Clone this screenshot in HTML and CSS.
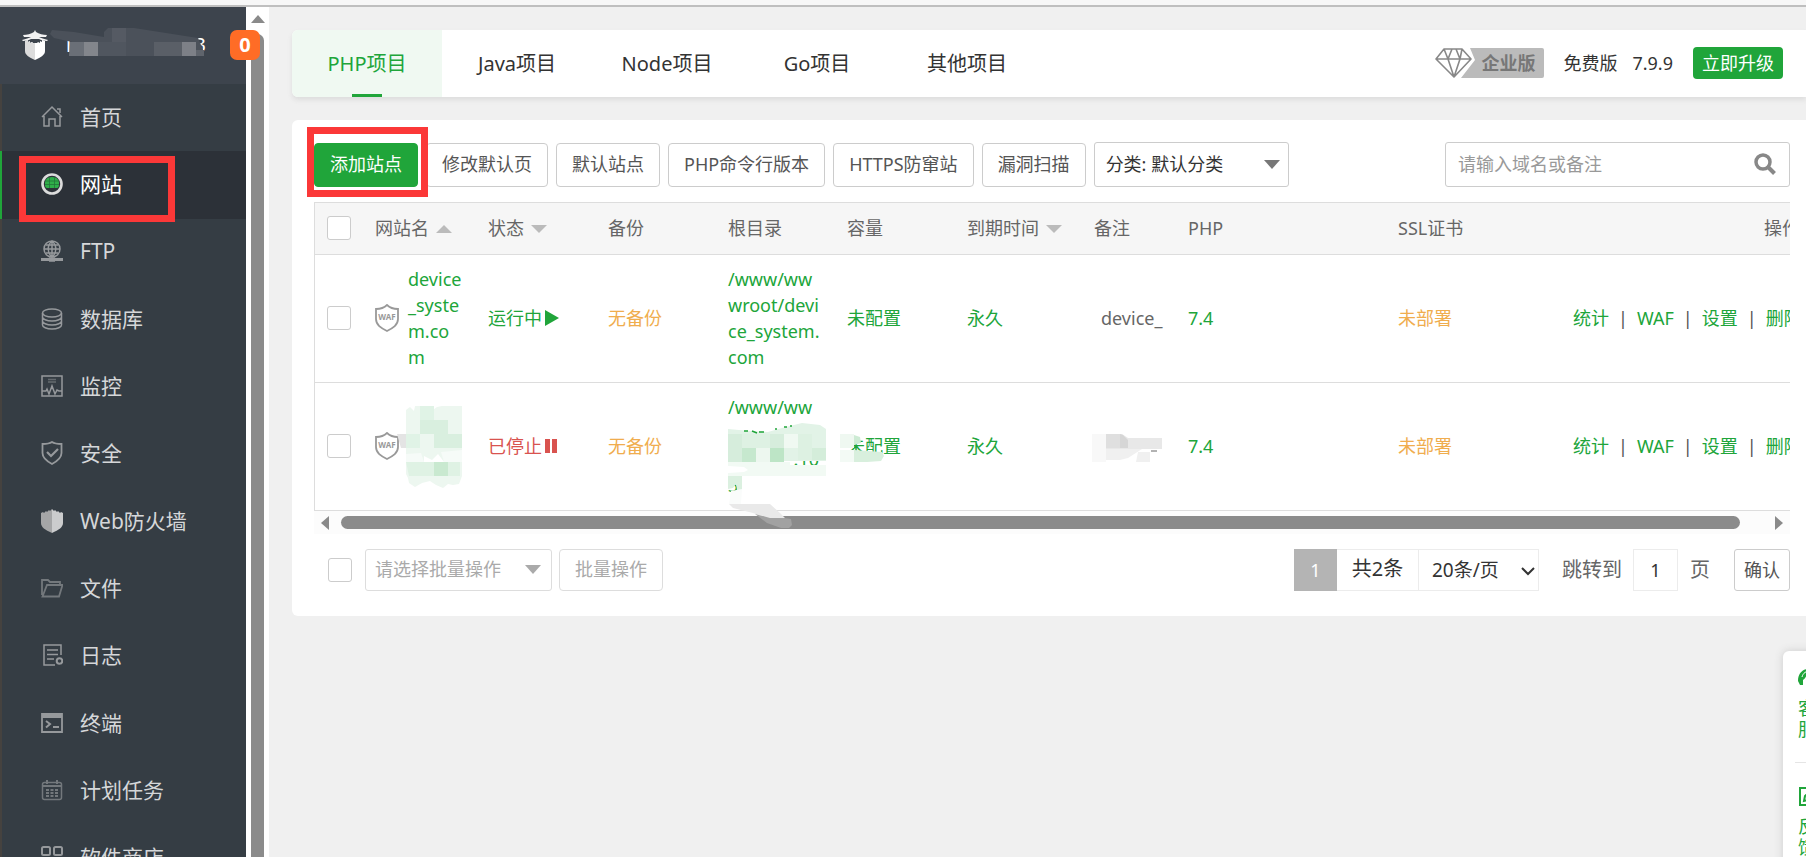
FILE: index.html
```html
<!DOCTYPE html>
<html lang="zh-CN">
<head>
<meta charset="utf-8">
<title>网站</title>
<link rel="stylesheet" href="styles.css">
</head>
<body>
<div class="chrome-edge"></div>
<div class="app">
  <aside class="sidebar">
    <header class="brand">
      <svg class="brand-logo" viewBox="0 0 26 30" width="26" height="30" aria-hidden="true">
        <path d="M13 0l1 2c3 2 7 3 11 3l-1 2H2L1 5c4 0 8-1 11-3z" fill="#f2f2f2"/>
        <path d="M0 10c4-1 7-2 9-3h8c2 1 5 2 9 3l-1 1c-3 0-6-1-8-2H9c-2 1-5 2-8 2z" fill="#f2f2f2"/>
        <path d="M3 11l3-1v2l2-1v2l2-1 1 1h4l1-1 2 1v-2l2 1v-2l3 1v10c0 4-4 6-10 9z" fill="#fff"/>
        <path d="M3 11l3-1v2l2-1v2l2-1 1 1h2v17C7 27 3 25 3 21z" fill="#dcdcdc"/>
      </svg>
      <span class="brand-name"><span>T</span><span>3</span></span>
      <svg class="brand-mask" viewBox="50 27 156 30" width="156" height="30" aria-hidden="true">
        <path d="M52 30l22 2 30 5v-5l4-4h26l64 10 6 14-3 4H69l3-14-18-4-4-4z" fill="#4b515a"/>
        <path d="M70 42h14v14H69z" fill="#6a6f77"/><path d="M84 42h14v14H84z" fill="#83868c"/>
        <path d="M98 42h28v14H98z" fill="#50565f"/><path d="M112 28h14v14h-14z" fill="#555a63"/>
        <path d="M154 42h28v14h-28z" fill="#5a5f67"/><path d="M182 42h14v14h-14z" fill="#7d8087"/>
        <path d="M196 50h8v6h-8z" fill="#5f646c"/>
      </svg>
      <span class="badge">0</span>
    </header>
    <nav class="menu">
      <a class="item" href="#"><svg class="ico" viewBox="0 0 22 22"><path d="M1 11L11 1l10 10M3 10v10h5v-7h6v7h5V10M16 3h3v4"/></svg>首页</a>
      <a class="item active" href="#"><svg class="ico" viewBox="0 0 22 22"><circle cx="11" cy="11" r="9.500" stroke="#dcdcdc" stroke-width="2.600"/><path d="M4 10c0-3 2-6 7-6s7 3 7 6v2c0 2-1 3-2 3H6c-1 0-2-1-2-3z" fill="#2fae49" stroke="none"/><path d="M4 8h14M4 11.500h14M8.500 4v11M13.500 4v11" stroke="#23753a" stroke-width=".8"/></svg>网站</a>
      <a class="item" href="#"><svg class="ico" viewBox="0 0 22 22"><circle cx="11" cy="9" r="8"/><path d="M3 9h16M11 1v16M5 5h12M5 13h12M11 1c-5 4-5 12 0 16M11 1c5 4 5 12 0 16"/><path d="M0 19.500h22" stroke-width="3"/><path d="M8 19.500h6" stroke-width="4.500"/></svg>FTP</a>
      <a class="item" href="#"><svg class="ico" viewBox="0 0 22 22"><ellipse cx="11" cy="5" rx="9.500" ry="4"/><path d="M1.500 5v12c0 2 4 4 9.500 4s9.500-2 9.500-4V5M1.500 9c0 2 4 4 9.500 4s9.500-2 9.500-4M1.500 13c0 2 4 4 9.500 4s9.500-2 9.500-4"/></svg>数据库</a>
      <a class="item" href="#"><svg class="ico" viewBox="0 0 22 22"><path d="M1 1h20v20H1zM1 16h4l1-2 2 5 3-8 3 8 2-4 2 1h3"/><path d="M7 4.500h8M7 7h8" opacity=".5"/></svg>监控</a>
      <a class="item" href="#"><svg class="ico" viewBox="0 0 22 24"><path d="M11 1c3 2 6 2 9.500 2v9c0 5-4 8-9.500 11-5.500-3-9.500-6-9.500-11V3C5 3 8 3 11 1z" stroke-width="1.800"/><path d="M6 11l4 4 7-7" stroke-width="2.200"/></svg>安全</a>
      <a class="item" href="#"><svg class="ico" viewBox="0 0 22 24"><path d="M0 4l2-1 1 1 2-2 1 1 2-2 1 1 2-2v24C4 21 0 18 0 14z" fill="#a5a6a7" stroke="none"/><path d="M22 4l-2-1-1 1-2-2-1 1-2-2-1 1-2-2v24c7-3 11-6 11-10z" fill="#cbcccd" stroke="none"/></svg>Web防火墙</a>
      <a class="item" href="#"><svg class="ico dim" viewBox="0 0 22 22"><path d="M1 18V3h6l2 2h10v3M1.500 19.500L6 8h15.500L18 19.500z" stroke-width="1.800"/></svg>文件</a>
      <a class="item" href="#"><svg class="ico" viewBox="0 0 22 22"><path d="M14 21H3V1h17v10M6 6h11M6 10.500h11M6 15h7"/><circle cx="18.500" cy="17" r="2.800" stroke-width="2"/></svg>日志</a>
      <a class="item" href="#"><svg class="ico" viewBox="0 0 22 22"><path d="M1 2h20v18H1z" stroke-width="1.800"/><path d="M1 4h20" stroke-width="4"/><path d="M5 9l4 3-4 3.500M12 15h6" stroke-width="2"/></svg>终端</a>
      <a class="item" href="#"><svg class="ico dim" viewBox="0 0 22 22"><rect x="1.500" y="3.500" width="19" height="17" rx="2"/><path d="M1.500 7h19M6 1v4M16 1v4" stroke-width="2"/><path d="M5 11h3M9.500 11h3M14 11h3M5 14h3M9.500 14h3M14 14h3M5 17h3M9.500 17h3M14 17h3" stroke-width="2"/></svg>计划任务</a>
      <a class="item" href="#"><svg class="ico" viewBox="0 0 22 22"><rect x="1" y="1" width="8" height="8" rx="1.500" stroke-width="2"/><rect x="13" y="1" width="8" height="8" rx="1.500" stroke-width="2"/><rect x="1" y="13" width="8" height="8" rx="1.500" stroke-width="2"/><rect x="13" y="13" width="8" height="8" rx="1.500" stroke-width="2"/></svg>软件商店</a>
    </nav>
    <div class="mark mark-menu"></div>
  </aside>
  <div class="vbar"><span class="tri up"></span><span class="vthumb"></span></div>
  <main class="main">
    <section class="tabs">
      <nav class="tab-list">
        <a class="tab on" href="#">PHP项目</a>
        <a class="tab" href="#">Java项目</a>
        <a class="tab" href="#">Node项目</a>
        <a class="tab" href="#">Go项目</a>
        <a class="tab" href="#">其他项目</a>
      </nav>
      <div class="edition">
        <span class="pro">
          <svg viewBox="0 0 110 32" width="110" height="32" aria-hidden="true">
            <path d="M35 1h72a2 2 0 0 1 2 2v26a2 2 0 0 1-2 2H26L40 13z" fill="#bbb"/>
            <path d="M1 12L9 2h18l9 10-17 18zM1 12h35M9 2l4 10 6 18 6-18 2-10M13 12l4-10M25 12L21 2" fill="none" stroke="#888" stroke-width="1.600" stroke-linejoin="round"/>
          </svg>
          <b>企业版</b>
        </span>
        <span class="free">免费版</span>
        <span class="ver">7.9.9</span>
        <button class="upgrade" type="button">立即升级</button>
      </div>
    </section>

    <section class="panel">
      <div class="toolbar">
        <span class="add-wrap"><button class="btn primary" type="button">添加站点</button><span class="mark mark-add"></span></span>
        <button class="btn" type="button">修改默认页</button>
        <button class="btn" type="button">默认站点</button>
        <button class="btn" type="button">PHP命令行版本</button>
        <button class="btn" type="button">HTTPS防窜站</button>
        <button class="btn" type="button">漏洞扫描</button>
        <span class="pick pick-cat"><select aria-label="分类"><option>分类: 默认分类</option></select><span class="tri down"></span></span>
        <span class="search">
          <input type="text" placeholder="请输入域名或备注" aria-label="请输入域名或备注">
          <svg viewBox="0 0 22 22" width="22" height="22" aria-hidden="true"><circle cx="9" cy="9" r="7" fill="none" stroke="#888" stroke-width="3.500"/><path d="M14 14l6.500 6.500" stroke="#888" stroke-width="4"/></svg>
        </span>
      </div>

      <div class="grid-wrap">
        <table class="sites">
          <colgroup><col class="c-check"><col class="c-name"><col class="c-mid"><col class="c-mid"><col class="c-root"><col class="c-mid"><col class="c-exp"><col class="c-note"><col class="c-php"><col class="c-ssl"><col class="c-ops"></colgroup>
          <thead>
            <tr>
              <th><input class="tick" type="checkbox" aria-label="全选"></th>
              <th>网站名<span class="tri sort asc"></span></th>
              <th>状态<span class="tri sort"></span></th>
              <th>备份</th><th>根目录</th><th>容量</th>
              <th>到期时间<span class="tri sort"></span></th>
              <th>备注</th><th>PHP</th><th>SSL证书</th><th class="ops">操作</th>
            </tr>
          </thead>
          <tbody>
            <tr>
              <td><input class="tick" type="checkbox" aria-label="选择站点一"></td>
              <td><span class="site"><svg class="waf" viewBox="0 0 24 28"><path d="M12 1c3 3 7 4 11 4v10c0 6-5 9-11 12C6 24 1 21 1 15V5c4 0 8-1 11-4z"/><text x="12" y="16" text-anchor="middle">WAF</text></svg><a class="wrap" href="#">device_system.com</a></span></td>
              <td><a class="state" href="#">运行中<svg viewBox="0 0 14 16" width="14" height="16"><path d="M0 0l14 8-14 8z" fill="#20a53a"/></svg></a></td>
              <td><a class="warn" href="#">无备份</a></td>
              <td><a class="wrap" href="#">/www/wwwroot/device_system.com</a></td>
              <td><a href="#">未配置</a></td>
              <td><a href="#">永久</a></td>
              <td><span class="note">device_</span></td>
              <td><a href="#">7.4</a></td>
              <td><a class="warn" href="#">未部署</a></td>
              <td class="ops"><a href="#">统计</a><i>|</i><a href="#">WAF</a><i>|</i><a href="#">设置</a><i>|</i><a href="#">删除</a></td>
            </tr>
            <tr>
              <td><input class="tick" type="checkbox" aria-label="选择站点二"></td>
              <td><span class="site"><svg class="waf" viewBox="0 0 24 28"><path d="M12 1c3 3 7 4 11 4v10c0 6-5 9-11 12C6 24 1 21 1 15V5c4 0 8-1 11-4z"/><text x="12" y="16" text-anchor="middle">WAF</text></svg></span></td>
              <td><a class="state stopped" href="#">已停止<svg viewBox="0 0 12 14" width="12" height="14"><path d="M0 0h5v14H0zM7 0h5v14H7z" fill="#d9534f"/></svg></a></td>
              <td><a class="warn" href="#">无备份</a></td>
              <td><a class="path" href="#"><span>/www/ww</span><span></span><span class="end">.10</span><span>3</span></a></td>
              <td><a href="#">未配置</a></td>
              <td><a href="#">永久</a></td>
              <td><span class="note"></span></td>
              <td><a href="#">7.4</a></td>
              <td><a class="warn" href="#">未部署</a></td>
              <td class="ops"><a href="#">统计</a><i>|</i><a href="#">WAF</a><i>|</i><a href="#">设置</a><i>|</i><a href="#">删除</a></td>
            </tr>
          </tbody>
        </table>
        <div class="hbar"><span class="tri left"></span><span class="hthumb"></span><span class="tri right"></span></div>
        <svg class="redact" viewBox="314 202 1476 332" width="1476" height="332" aria-hidden="true">
          <path d="M397 434h10v14h-6z" fill="#e4e4e4"/>
          <path d="M406 410l4-3 4 4 1-5h14l4 4 4-3 5-1h20v70l-3 8-6 1-5-1-5 4-7-3-6-4-8 2-7 4-6-4-1-5-2-4z" fill="#edf7f0"/>
          <path d="M420 406h14v14h-14zM434 420h14v14h-14zM406 434h14v14h-14z" fill="#e0f3e6"/>
          <path d="M420 420h28v14h-28zM434 434h28v14h-28z" fill="#d9efdf"/>
          <path d="M406 462h54v14h-51z" fill="#dff2e4"/><path d="M434 462h14v14h-14z" fill="#c9e9d0"/>
          <path d="M406 454l15-1 3 9h-18zM441 452l21-2v12h-18z" fill="#f6fbf8"/><path d="M424 456l8 4 6-6 6 8h-20z" fill="#fff"/>
          <path d="M728 429l22 2 18 1 14-4 20-5 18 2 6 4v32h-98z" fill="#e2f3e7"/>
          <path d="M744 431h4M752 431l5 2M759 432h5M775 429h2M784 427h3M790 426h2" stroke="#20a53a" stroke-width="1.500"/>
          <path d="M728 434h14v14h-14zM728 448h14v14h-14zM770 434h14v14h-14z" fill="#d6eddc"/>
          <path d="M742 434h28v14h-28z" fill="#def1e3"/><path d="M784 434h14v14h-14z" fill="#f0f9f2"/><path d="M798 434h14v26h-14z" fill="#ddf1e2"/>
          <path d="M742 448h14v14h-14z" fill="#c6e8ce"/><path d="M756 448h14v14h-14z" fill="#edf7ef"/><path d="M770 448h14v14h-14z" fill="#bde5c6"/><path d="M812 448h14v12h-14z" fill="#d4edda"/>
          <path d="M728 462h62v3h36v11h-98z" fill="#f2faf4"/>
          <path d="M728 466l16 1 4 3-4 2-16 1z" fill="#fff"/>
          <path d="M728 476h14v14h-5l-1-6-3 4-5 1z" fill="#dbf0e0"/>
          <path d="M731 491l11-2-1 15h-12z" fill="#fafcfb"/>
          <path d="M729 504h41l10 9 5 5h-18l-14-5-20-5z" fill="#e9e9e9"/>
          <path d="M755 514l15 4h14l7 1 1 6-3 3h-8l-14-5z" fill="#a2a2a2"/>
          <path d="M840 434h14v14h-14z" fill="#eff8f1"/><path d="M854 435l6 2 1 6-7 2z" fill="#cdebd4"/>
          <path d="M840 450h14v12h-14z" fill="#f3faf5"/><path d="M854 450l28 2 2 4-3 5-14 1h-13z" fill="#d8efdd"/>
          <path d="M1092 434h14v28h-14z" fill="#f8f8f8"/><path d="M1106 434h16l6 4h34v11h-56z" fill="#e8e8e8"/>
          <path d="M1106 434h14v14h-14z" fill="#dfdfdf"/><path d="M1120 434l3 1 5 5v8h-8z" fill="#d6d6d6"/>
          <path d="M1106 449h36l-14 9-8 2h-14zM1138 452h12v10h-14z" fill="#f0f0f0"/><path d="M1151 451h6" stroke="#666"/>
        </svg>
      </div>

      <div class="footer">
        <input class="tick" type="checkbox" aria-label="选择全部站点">
        <span class="pick pick-batch"><select aria-label="批量操作类型"><option>请选择批量操作</option></select><span class="tri down"></span></span>
        <button class="btn muted" type="button">批量操作</button>
        <div class="pager">
          <span class="page-now">1</span>
          <span class="page-total">共2条</span>
          <span class="pick pick-size"><select aria-label="每页条数"><option>20条/页</option></select><svg viewBox="0 0 14 10" width="14" height="10" aria-hidden="true"><path d="M1 2l6 6 6-6" fill="none" stroke="#333" stroke-width="2"/></svg></span>
          <label class="jump" for="jump">跳转到</label>
          <input class="page-in" id="jump" type="text" value="1">
          <span class="unit">页</span>
          <button class="ok" type="button">确认</button>
        </div>
      </div>
    </section>
  </main>
  <aside class="help">
    <a class="help-item" href="#"><svg viewBox="0 0 20 18" width="20" height="18"><path d="M0 12C0 5 4 0 11 0s9 5 9 11v4h-4V9c-3 0-6-2-7-4-1 3-2 5-4 6v5H2z" fill="#20a53a"/><path d="M4 8c1-4 4-6 8-6" stroke="#fff" fill="none"/></svg>客服</a>
    <a class="help-item" href="#"><svg viewBox="0 0 20 20" width="20" height="20"><path d="M12 1H2v17h16V8M6 14l1-5 9-8 3 3-9 9z" fill="none" stroke="#20a53a" stroke-width="2"/></svg>反馈</a>
  </aside>
</div>
</body>
</html>
```
FILE: styles.css
```css
* { box-sizing: border-box; }
body {
  margin: 0;
  height: 100vh;
  overflow: hidden;
  background: #f0f0f0;
  color: #555;
  font: 18px/26px "Noto Sans", "Noto Sans CJK SC", sans-serif;
}
a { color: #20a53a; text-decoration: none; }
button, input, select { font: inherit; color: inherit; margin: 0; }
select { appearance: none; background: transparent; border: 0; outline: 0; }

.chrome-edge { height: 7px; background: #f7f7f7; border-bottom: 2px solid #bfbfbf; }
.app {
  position: relative;
  display: grid;
  grid-template-columns: 246px 23px minmax(0, 1fr);
  height: calc(100vh - 7px);
  overflow: hidden;
}

/* sidebar */
.sidebar { position: relative; background: #353d44; }
.brand {
  position: relative;
  display: flex;
  align-items: center;
  gap: 15px;
  height: 77px;
  padding: 0 40px 2px 22px;
  background: #3d444d;
  color: #fff;
}
.brand-name { display: flex; flex: 1; justify-content: space-between; font-size: 20px; }
.brand-logo { flex: none; }
.brand-mask { position: absolute; left: 50px; top: 20px; }
.badge {
  position: absolute;
  z-index: 2;
  right: -14px;
  top: 23px;
  width: 30px;
  height: 30px;
  border-radius: 7px;
  background: #ff6c26;
  font-weight: 700;
  font-size: 20px;
  line-height: 30px;
  text-align: center;
}
.menu { display: grid; grid-auto-rows: 1fr; height: 808px; }
.item {
  display: flex;
  align-items: center;
  gap: 17px;
  padding: 0 0 2px 39px;
  border-left: 2px solid #45423f;
  color: #d5d7d9;
  font-size: 21px;
}
.item.active { background: #2c3138; border-color: #20a53a; color: #fff; }
.ico { width: 22px; height: 24px; fill: none; stroke: #96999c; stroke-width: 1.5px; flex: none; }
.ico.dim { stroke: #73787c; }

.mark { position: absolute; border: 7px solid #fb3838; pointer-events: none; }
.mark-menu { left: 19px; top: 149px; width: 156px; height: 66px; }
.mark-add { left: -7px; top: -16px; width: 121px; height: 70px; }

/* arrows and scroll bars */
.tri { display: inline-block; width: 0; height: 0; border: 8px solid transparent; }
.tri.up { border-width: 0 7px 8px; border-bottom-color: #8a8a8a; }
.tri.down { border-width: 9px 8px 0; border-top-color: #777; }
.tri.left { border-width: 7px 8px 7px 0; border-right-color: #8a8a8a; }
.tri.right { border-width: 7px 0 7px 8px; border-left-color: #8a8a8a; }
.tri.sort { border-width: 8px 8px 0; border-top-color: #bbb; margin-left: 7px; vertical-align: 2px; }
.tri.sort.asc { border-width: 0 8px 8px; border-bottom-color: #bbb; }
.vbar { display: flex; flex-direction: column; align-items: center; gap: 11px; padding-top: 8px; background: #fff; }
.vthumb { flex: 1; width: 13px; border-radius: 7px 7px 0 0; background: #8b8b8b; }
.hbar { display: flex; align-items: center; gap: 12px; height: 23px; padding: 0 7px; background: #fcfcfc; }
.hbar .tri.right { margin-left: 23px; }
.hthumb { flex: 1; height: 13px; border-radius: 7px; background: #8b8b8b; }

/* project tabs */
.main { padding: 23px 0 0 23px; }
.tabs {
  display: flex;
  justify-content: space-between;
  height: 67px;
  border-radius: 6px 0 0 6px;
  background: #fff;
  box-shadow: 0 3px 5px #ddd;
}
.tab-list { display: flex; }
.tab {
  position: relative;
  width: 150px;
  line-height: 67px;
  font-size: 20px;
  text-align: center;
  color: #333;
}
.tab.on { color: #20a53a; background: #f0f9f2; border-radius: 6px 0 0 6px; }
.tab.on::after {
  content: "";
  position: absolute;
  left: 60px;
  bottom: 0;
  width: 30px;
  height: 3px;
  background: #20a53a;
}
.edition { display: flex; align-items: center; padding: 0 23px 2px 0; color: #333; }
.pro { position: relative; display: flex; }
.pro b { position: absolute; left: 46px; top: 3px; color: #777; }
.free { margin-left: 18px; }
.ver { margin: 0 20px 0 15px; }
.upgrade { height: 32px; padding: 0 9px; border: 0; border-radius: 4px; background: #20a53a; color: #fff; line-height: 30px; }

/* panel */
.panel { margin-top: 23px; padding: 22px 16px 25px 22px; border-radius: 6px 0 0 6px; background: #fff; }
.toolbar { display: flex; align-items: center; gap: 8px; height: 45px; margin-bottom: 15px; }
.add-wrap { position: relative; }
.add-wrap .btn { display: block; }
.btn {
  height: 44px;
  padding: 0 15px 2px;
  border: 1px solid #ccc;
  border-radius: 4px;
  background: #fff;
  white-space: nowrap;
}
.btn.primary { background: #20a53a; border-color: #20a53a; color: #fff; }
.btn.muted { height: 42px; border-color: #ddd; color: #aaa; }
.pick { position: relative; display: flex; border: 1px solid #ccc; border-radius: 3px; }
.pick select { width: 100%; padding: 0 11px 2px; }
.pick .tri { position: absolute; right: 8px; top: 17px; pointer-events: none; }
.pick-cat { width: 195px; height: 45px; color: #333; }
.pick-batch { width: 187px; height: 42px; border-color: #ddd; color: #aaa; }
.pick-batch select { padding: 0 9px 2px; }
.pick-batch .tri.down { right: 10px; top: 15px; border-top-color: #aaa; }
.search { position: relative; width: 345px; height: 45px; margin-left: auto; }
.search input { width: 100%; height: 100%; padding: 0 50px 2px 12px; border: 1px solid #ccc; border-radius: 3px; outline: 0; }
.search input::placeholder { color: #999; opacity: 1; }
.search svg { position: absolute; right: 14px; top: 11px; }

.tick {
  appearance: none;
  display: block;
  width: 24px;
  height: 24px;
  border: 1px solid #ccc;
  border-radius: 3px;
  background: #fff;
}

/* site table */
.grid-wrap { position: relative; overflow: hidden; }
.sites { width: 1499px; table-layout: fixed; border-collapse: separate; border-spacing: 0; border: 1px solid #ddd; border-bottom: 0; }
.c-check { width: 48px; }
.c-name { width: 113px; }
.c-mid { width: 120px; }
.c-root { width: 119px; }
.c-exp { width: 127px; }
.c-note { width: 94px; }
.c-php { width: 210px; }
.c-ssl { width: 175px; }
.sites th { height: 52px; padding: 0 12px 2px; background: #f6f6f6; border-bottom: 1px solid #ddd; color: #666; font-weight: 400; text-align: left; white-space: nowrap; }
.sites td { height: 128px; padding: 11px 12px 12px; border-bottom: 1px solid #ddd; vertical-align: middle; }
.sites .ops { text-align: right; white-space: nowrap; }
.sites td.ops { padding-right: 17px; }
.ops i { margin: 0 9px; font-style: normal; }
.site { display: flex; align-items: center; gap: 9px; width: 90px; }
.site .wrap { flex: none; width: 57px; }
.wrap { display: block; word-break: break-all; }
.waf { flex: none; width: 24px; height: 28px; fill: none; stroke: #999; stroke-width: 1.8px; }
.waf text { fill: #999; stroke: none; font: 700 8px "Noto Sans", sans-serif; }
.state { display: flex; align-items: center; gap: 3px; }
.stopped { color: #d9534f; }
.warn { color: #f0ad4e; }
.path span { display: block; height: 26px; }
.path .end { padding-right: 4px; text-align: right; }
.note { display: block; padding-left: 7px; color: #666; }
.redact { position: absolute; left: 0; top: 0; pointer-events: none; }

/* footer */
.footer { display: flex; align-items: center; margin-top: 15px; padding-left: 14px; }
.pick-batch { margin: 0 7px 0 13px; }
.pager { display: flex; align-items: center; margin-left: auto; color: #333; }
.page-now, .page-total, .pick-size, .page-in { height: 42px; line-height: 40px; border: 1px solid #ececec; border-radius: 0; text-align: center; }
.page-now { width: 43px; background: #b4b4b4; border-color: #b4b4b4; color: #fff; }
.page-total { width: 82px; border-left: 0; font-size: 20px; line-height: 38px; }
.pick-size { width: 120px; border-left: 0; font-size: 19px; }
.pick-size select { padding: 0 13px; }
.pick-size svg { position: absolute; right: 3px; top: 16px; pointer-events: none; }
.jump { margin: 0 11px 0 23px; color: #666; font-size: 20px; }
.page-in { width: 45px; }
.unit { margin: 0 24px 0 12px; color: #666; font-size: 20px; }
.ok { height: 42px; padding: 0 9px; border: 1px solid #ccc; border-radius: 3px; background: #fff; color: #555; }

/* help rail */
.help {
  position: absolute;
  right: -24px;
  top: 644px;
  width: 47px;
  height: 240px;
  padding: 0 12px;
  border-radius: 6px;
  background: #fff;
  box-shadow: 0 0 8px #ccc;
}
.help-item { display: block; padding: 18px 3px 22px; line-height: 21px; word-break: break-all; }
.help-item svg { display: block; margin-bottom: 11px; }
.help-item + .help-item { padding-top: 24px; border-top: 1px solid #e5e5e5; }
.help-item + .help-item svg { margin-bottom: 9px; }
```
